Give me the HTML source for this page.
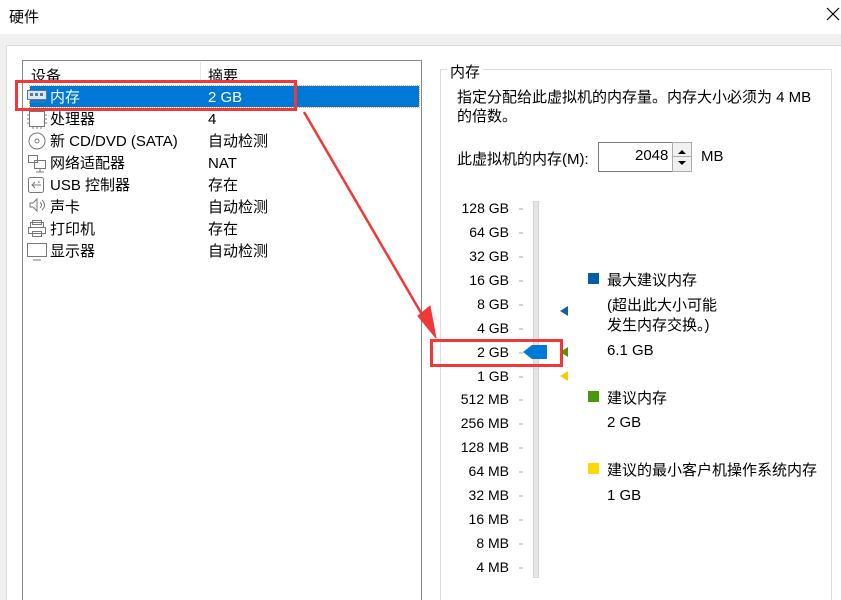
<!DOCTYPE html>
<html><head><meta charset="utf-8"><style>
*{margin:0;padding:0;box-sizing:border-box}
html,body{width:841px;height:600px;overflow:hidden}
body{background:#f0f0f0;font-family:"Liberation Sans","Noto Sans CJK SC",sans-serif;font-size:15px;color:#000;position:relative}
.a{position:absolute;white-space:nowrap}
#title{left:0;top:0;width:841px;height:34px;background:#fff}
#panel{left:6px;top:45px;width:845px;height:560px;background:#fff;border:1px solid #dcdcdc}
#list{left:22px;top:60px;width:400px;height:545px;border:1px solid #828790;background:#fff}
.sel{left:30px;top:86px;width:389px;height:21px;background:#0078d7;outline:1px dotted #f0a060}
.gb{left:440px;top:69px;width:392px;height:540px;border:1px solid #dcdcdc}
.lab{position:absolute;width:90px;text-align:right;left:419px;font-size:14px}
.sq{position:absolute;width:11px;height:11px}
</style></head><body>
<div class="a" id="title"></div>
<div class="a" style="left:9px;top:6px;font-size:15px">硬件</div>
<svg class="a" style="left:826px;top:7px" width="14" height="14"><path d="M1 1L13 13M13 1L1 13" stroke="#000" stroke-width="1.2"/></svg>
<div class="a" id="panel"></div>
<div class="a" id="list"></div>
<div class="a" style="left:200px;top:62px;width:1px;height:22px;background:#e5e5e5"></div>
<div class="a" style="left:31px;top:65px">设备</div>
<div class="a" style="left:208px;top:65px">摘要</div>
<div class="a sel"></div>
<div class="a" style="left:50px;top:87px;color:#fff;line-height:21px">内存</div>
<div class="a" style="left:208px;top:87px;color:#fff;line-height:21px">2 GB</div>
<svg class="a" style="left:27px;top:90px" width="20" height="13"><rect x="0.5" y="0.5" width="19" height="9" fill="#dfe9f5" stroke="#56789a"/><rect x="3" y="3" width="3" height="3" fill="#56789a"/><rect x="8" y="3" width="3" height="3" fill="#56789a"/><rect x="13" y="3" width="3" height="3" fill="#56789a"/><path d="M2 12H18" stroke="#56789a"/></svg>
<div class="a" style="left:50px;top:109px;line-height:22px">处理器<br>新 CD/DVD (SATA)<br>网络适配器</div>
<div class="a" style="left:50px;top:175px;line-height:22px">USB 控制器<br>声卡<br>打印机<br>显示器</div>
<div class="a" style="left:208px;top:109px;line-height:22px">4<br>自动检测<br>NAT<br>存在<br>自动检测<br>存在<br>自动检测</div>
<svg class="a" style="left:27px;top:110px" width="22" height="160" fill="none" stroke="#777">
<rect x="2.5" y="1.5" width="15" height="15"/><path d="M0 5h2M0 9h2M0 13h2M18 5h2M18 9h2M18 13h2M6 17v2M10 17v2M14 17v2"/>
<circle cx="10" cy="31" r="8"/><circle cx="10" cy="31" r="2"/>
<rect x="1.5" y="45.5" width="9" height="7"/><rect x="7.5" y="50.5" width="11" height="8"/><path d="M13 59v3M9 62h8"/>
<rect x="1.5" y="67.5" width="15" height="15" rx="2"/><path d="M5 75h9M8 72l-3 3 3 3M11 72h2"/>
<path d="M3 93h3l4-4v12l-4-4H3z M13 92q3 3 0 6 M15 90q5 5 0 10"/>
<rect x="3.5" y="112.5" width="13" height="5"/><rect x="1.5" y="117.5" width="17" height="6"/><rect x="5.5" y="110.5" width="9" height="4"/><rect x="5.5" y="121.5" width="9" height="5"/>
<rect x="0.5" y="133.5" width="19" height="13"/><path d="M6 150h8"/>
</svg>
<div class="a gb"></div>
<div class="a" style="left:447px;top:61px;background:#fff;padding:0 3px">内存</div>
<div class="a" style="left:457px;top:88px;line-height:19px">指定分配给此虚拟机的内存量。内存大小必须为 4 MB<br>的倍数。</div>
<div class="a" style="left:457px;top:148px">此虚拟机的内存(M):</div>
<div class="a" style="left:598px;top:142px;width:75px;height:30px;border:1px solid #7a7a7a;background:#fff"></div>
<div class="a" style="left:635px;top:147px">2048</div>
<div class="a" style="left:672px;top:142px;width:20px;height:30px;border:1px solid #adadad;background:#f0f0f0"></div>
<div class="a" style="left:673px;top:156px;width:18px;height:1px;background:#adadad"></div>
<svg class="a" style="left:676px;top:146px" width="12" height="22"><path d="M2 8L6 4 10 8z M2 15L10 15 6 19z" fill="#000"/></svg>
<div class="a" style="left:701px;top:148px">MB</div>
<div class="a" style="left:533px;top:201px;width:6px;height:377px;background:#e6e6e6;border:1px solid #d4d4d4"></div>
<div class="lab" style="top:200px">128 GB</div><div class="lab" style="top:224px">64 GB</div><div class="lab" style="top:248px">32 GB</div><div class="lab" style="top:272px">16 GB</div><div class="lab" style="top:296px">8 GB</div><div class="lab" style="top:320px">4 GB</div><div class="lab" style="top:344px">2 GB</div><div class="lab" style="top:368px">1 GB</div><div class="lab" style="top:391px">512 MB</div><div class="lab" style="top:415px">256 MB</div><div class="lab" style="top:439px">128 MB</div><div class="lab" style="top:463px">64 MB</div><div class="lab" style="top:487px">32 MB</div><div class="lab" style="top:511px">16 MB</div><div class="lab" style="top:535px">8 MB</div><div class="lab" style="top:559px">4 MB</div>
<svg class="a" style="left:515px;top:200px" width="70" height="380">
<g stroke="#aaa"><path d="M4 9h4M4 33h4M4 57h4M4 81h4M4 105h4M4 129h4M4 153h4M4 177h4M4 200h4M4 224h4M4 248h4M4 272h4M4 296h4M4 320h4M4 344h4M4 368h4"/></g>
<path d="M8 152l9-7h15v14h-15z" fill="#0078d7"/>
<path d="M45 111l8-5v10z" fill="#1160a8"/>
<path d="M45 152l8-5v10z" fill="#4a9a10"/>
<path d="M45 176l8-5v10z" fill="#f4d000"/>
</svg>
<div class="sq" style="left:588px;top:273px;background:#005fa8"></div>
<div class="a" style="left:607px;top:269px">最大建议内存</div>
<div class="a" style="left:607px;top:296px;line-height:20px">(超出此大小可能<br>发生内存交换。)</div>
<div class="a" style="left:607px;top:342px">6.1 GB</div>
<div class="sq" style="left:588px;top:391px;background:#4a960e"></div>
<div class="a" style="left:607px;top:387px">建议内存</div>
<div class="a" style="left:607px;top:414px">2 GB</div>
<div class="sq" style="left:588px;top:463px;background:#ffd800"></div>
<div class="a" style="left:607px;top:459px">建议的最小客户机操作系统内存</div>
<div class="a" style="left:607px;top:487px">1 GB</div>
<svg class="a" style="left:0;top:0" width="841" height="600" fill="none" stroke="#f03838" stroke-width="3">
<rect x="16.5" y="81.5" width="279" height="28"/>
<rect x="431.5" y="340.5" width="130" height="25"/>
<path d="M304 112L431 330" stroke-width="2.5"/>
<path d="M418 316L436 338 430 306z" fill="#f03838" stroke-width="1"/>
</svg>
</body></html>
